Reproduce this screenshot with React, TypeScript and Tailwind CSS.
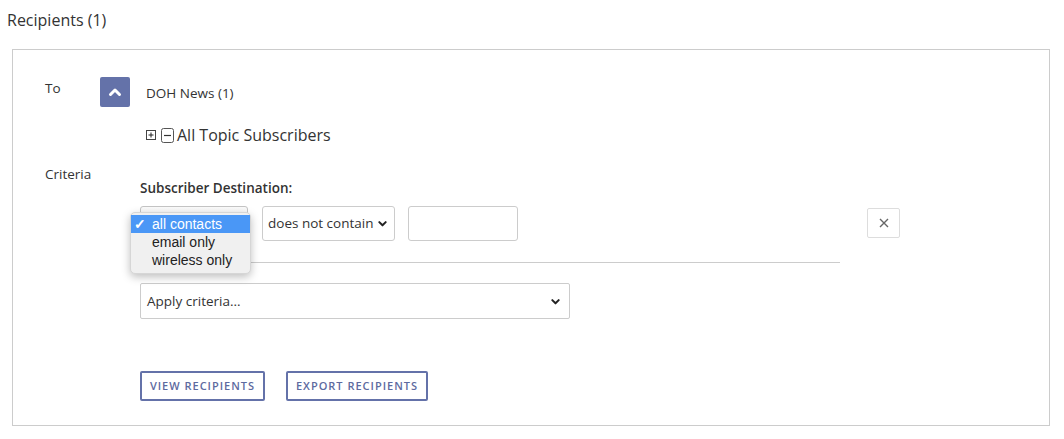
import React from "react";

const Chevron = () => (
  <svg className="w-[11px] h-[11px]" viewBox="0 0 12 12" fill="none" stroke="#222" strokeWidth="2.2" strokeLinecap="round" strokeLinejoin="round">
    <path d="M2.5 4.5 6 8l3.5-3.5" />
  </svg>
);

const App = () => {
  return (
    <div className="w-[1064px] h-[439px] bg-white text-[#333] font-['Open_Sans',sans-serif] overflow-hidden">
      <h2 className="pl-[7px] pt-[8px] text-[16px] leading-[24px] text-[#333]">Recipients (1)</h2>
      <section className="ml-[12px] mt-[17px] w-[1038px] border border-[#cccccc] pl-[32px] pt-[27px] pb-[24px]">
        {/* To */}
        <div className="flex">
          <div className="w-[55px] text-[13.5px] leading-[20px] pt-[1px]">To</div>
          <div className="flex flex-col">
            <div className="flex items-center">
              <button className="w-[30px] h-[30px] rounded-[2px] bg-[#6472a9] flex items-center justify-center">
                <svg className="w-[14px] h-[14px]" viewBox="0 0 14 14" fill="none" stroke="#fff" strokeWidth="3" strokeLinecap="round" strokeLinejoin="round">
                  <path d="M2.5 9.5 7 5l4.5 4.5" />
                </svg>
              </button>
              <span className="ml-[16px] text-[13.5px] leading-[20px] mt-[2px]">DOH News (1)</span>
            </div>
            <div className="flex items-center ml-[46px] mt-[18px] h-[20px]">
              <svg className="w-[10px] h-[10px]" viewBox="0 0 10 10">
                <rect x="0.5" y="0.5" width="9" height="9" fill="#fff" stroke="#444" />
                <path d="M2.5 5h5M5 2.5v5" stroke="#222" strokeWidth="1" />
              </svg>
              <svg className="ml-[5px] w-[13px] h-[15px]" viewBox="0 0 13 15">
                <rect x="0.5" y="0.5" width="12" height="14" rx="2" fill="#fff" stroke="#555" />
                <path d="M3 7.5h7" stroke="#333" strokeWidth="1.2" />
              </svg>
              <span className="ml-[3px] text-[16px] leading-[20px]">All Topic Subscribers</span>
            </div>
          </div>
        </div>

        {/* Criteria */}
        <div className="flex mt-[19px]">
          <div className="w-[95px] text-[13.5px] leading-[20px]">Criteria</div>
          <div className="flex flex-col">
            <div className="mt-[14px] text-[13.5px] leading-[20px] font-semibold">Subscriber Destination:</div>
            <div className="flex items-start mt-[8px]">
              <div className="relative w-[108px] h-[35px] rounded-[3px] border border-[#c4c4c4] bg-gradient-to-b from-[#fafafa] to-[#ececec]">
                <div className="absolute left-[-11px] top-[5px] w-[121px] pt-[2px] pb-[4px] rounded-[5px] bg-[#f0f0f0] border border-[#d6d6d6] shadow-[0_3px_8px_rgba(0,0,0,0.25)] font-['Liberation_Sans',sans-serif] text-[14px] text-[#222] z-10">
                  <div className="flex h-[18px] items-center bg-[#4a97f6] text-white">
                    <span className="w-[21px] pl-[3px] text-[14px] font-bold">✓</span>
                    <span>all contacts</span>
                  </div>
                  <div className="flex h-[18px] items-center pl-[21px]">email only</div>
                  <div className="flex h-[18px] items-center pl-[21px]">wireless only</div>
                </div>
              </div>
              <div className="ml-[14px] w-[133px] h-[35px] rounded-[3px] border border-[#cccccc] flex items-center justify-between pl-[5px] pr-[6px] text-[13.5px]">
                <span>does not contain</span>
                <Chevron />
              </div>
              <div className="ml-[13px] w-[110px] h-[35px] rounded-[3px] border border-[#cccccc]"></div>
              <button className="ml-[349px] mt-[2px] w-[33px] h-[30px] rounded-[2px] border border-[#dddddd] flex items-center justify-center">
                <svg className="w-[10px] h-[10px]" viewBox="0 0 10 10" stroke="#666" strokeWidth="1.4">
                  <path d="M1 1l8 8M9 1l-8 8" />
                </svg>
              </button>
            </div>
            <div className="mt-[21px] w-[700px] border-t border-[#cccccc]"></div>
            <div className="mt-[20px] w-[430px] h-[36px] rounded-[2px] border border-[#cccccc] flex items-center justify-between pl-[6px] pr-[8px] text-[13.5px]">
              <span>Apply criteria...</span>
              <Chevron />
            </div>
            <div className="flex mt-[52px] gap-[21px]">
              <button className="w-[125px] h-[30px] rounded-[2px] border-2 border-[#6472a9] text-[#5d6aa0] text-[11px] font-semibold tracking-[1px]">
                VIEW RECIPIENTS
              </button>
              <button className="w-[142px] h-[30px] rounded-[2px] border-2 border-[#6472a9] text-[#5d6aa0] text-[11px] font-semibold tracking-[1px]">
                EXPORT RECIPIENTS
              </button>
            </div>
          </div>
        </div>
      </section>
    </div>
  );
};

export default App;
